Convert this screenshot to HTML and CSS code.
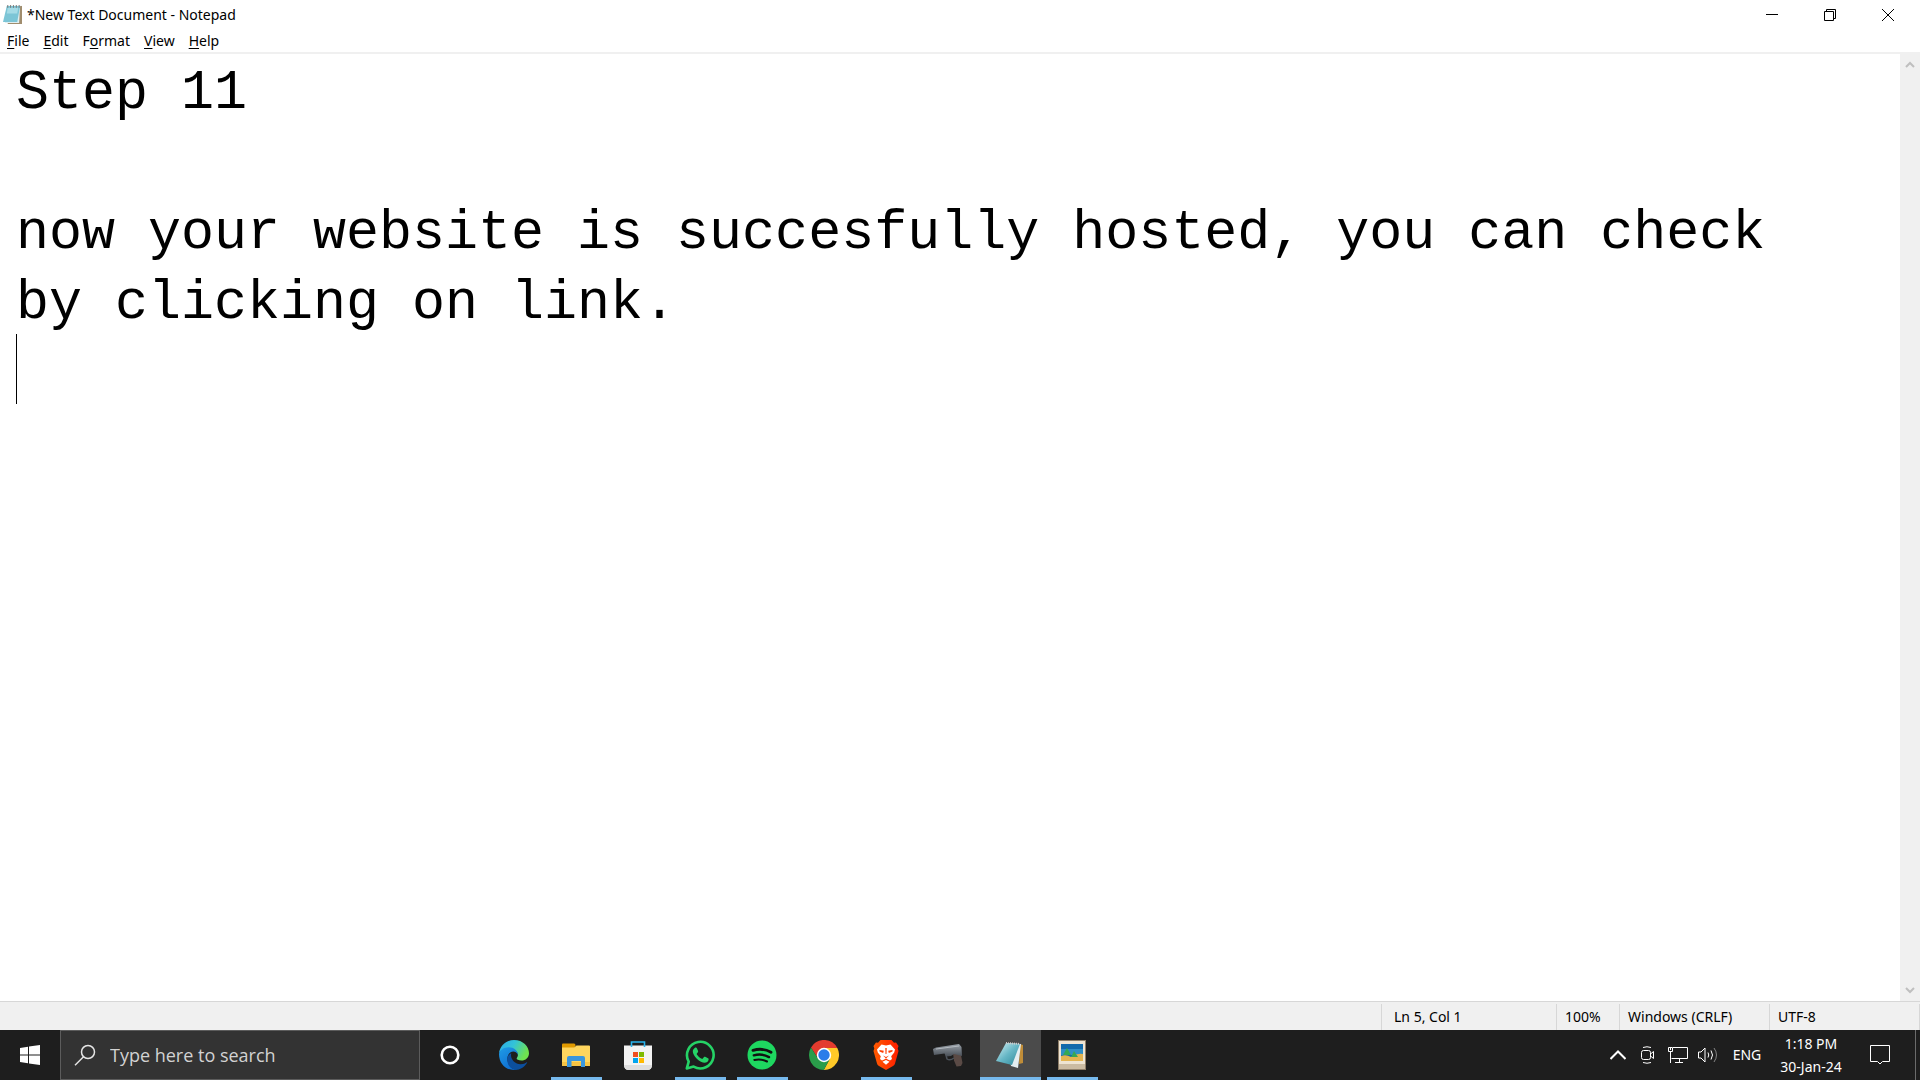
FILE: index.html
```html
<!DOCTYPE html>
<html lang="en">
<head>
<meta charset="utf-8">
<title>*New Text Document - Notepad</title>
<link rel="stylesheet" href="styles.css">
</head>
<body>
<main class="window">
  <header class="titlebar">
    <svg class="title-icon" viewBox="0 0 20 22" aria-hidden="true">
      <path d="M5 2h15v19H5z" fill="#a08d6e"/>
      <path d="M4 2h14l-1 18H2z" fill="#dfeef1"/>
      <path d="M4 2h14l-3 17H0z" fill="#7cc5d6"/>
      <path d="M5 4h11l-1 6H4z" fill="#a5dbe6"/>
      <path d="M5 1v3M8 1v3M11 1v3M14 1v3M17 1v3" stroke="#777" stroke-width="1"/>
    </svg>
    <h1 class="title">*New Text Document - Notepad</h1>
    <div class="window-controls">
      <button class="control" aria-label="Minimize"><svg viewBox="0 0 12 12"><path d="M0 5.500h12"/></svg></button>
      <button class="control" aria-label="Restore"><svg viewBox="0 0 12 12"><path d="M.5 2.500h9v9h-9zM2.500 2.500v-2h9v9h-2"/></svg></button>
      <button class="control" aria-label="Close"><svg viewBox="0 0 12 12"><path d="M0 0l12 12M12 0L0 12"/></svg></button>
    </div>
  </header>
  <nav class="menubar">
    <button class="menu"><u>F</u>ile</button>
    <button class="menu"><u>E</u>dit</button>
    <button class="menu">F<u>o</u>rmat</button>
    <button class="menu"><u>V</u>iew</button>
    <button class="menu"><u>H</u>elp</button>
  </nav>
  <section class="editor">
    <textarea class="document" aria-label="Text editor" spellcheck="false">Step 11

now your website is succesfully hosted, you can check
by clicking on link.
</textarea>
    <span class="caret"></span>
    <div class="scrollbar">
      <button class="scroll-button" aria-label="Scroll up"><svg viewBox="0 0 10 8"><path d="M1 6l4-4 4 4"/></svg></button>
      <button class="scroll-button" aria-label="Scroll down"><svg viewBox="0 0 10 8"><path d="M1 2l4 4 4-4"/></svg></button>
    </div>
  </section>
  <footer class="statusbar">
    <span class="status position">Ln 5, Col 1</span>
    <span class="status zoom">100%</span>
    <span class="status ending">Windows (CRLF)</span>
    <span class="status encoding">UTF-8</span>
  </footer>
</main>
<footer class="taskbar">
  <button class="start" aria-label="Start">
    <svg width="20" height="20" viewBox="0 0 20 20"><path fill="#fff" d="M0 3l8-1.200V9.500H0zM9 1.600L20 0v9.500H9zM0 10.500h8v7.800L0 17zM9 10.500h11V20L9 18.400z"/></svg>
  </button>
  <label class="search">
    <svg width="22" height="22" viewBox="0 0 22 22" fill="none" stroke="#e6e6e6" stroke-width="1.500"><circle cx="14" cy="8" r="6.500"/><path d="M9.500 12.800L1 21.200"/></svg>
    <input class="search-input" type="text" placeholder="Type here to search" aria-label="Search">
  </label>
  <button class="cortana" aria-label="Cortana"><svg width="20" height="20" viewBox="0 0 20 20"><circle cx="10" cy="10" r="8.300" fill="none" stroke="#fff" stroke-width="2.600"/></svg></button>
  <div class="apps">
    <button class="app" aria-label="Edge">
      <svg width="30" height="30" viewBox="0 0 30 30">
        <defs>
          <linearGradient id="edge-top" x1="0" y1="0" x2="1" y2=".4"><stop offset="0" stop-color="#2aa7e8"/><stop offset=".5" stop-color="#33c3d8"/><stop offset="1" stop-color="#6fe34f"/></linearGradient>
          <linearGradient id="edge-left" x1="0" y1="0" x2=".6" y2="1"><stop offset="0" stop-color="#1f9ce6"/><stop offset="1" stop-color="#0f6dd0"/></linearGradient>
        </defs>
        <path fill="url(#edge-top)" d="M0 13C1 5.500 7.500 0 15 0c9 0 15 6.500 15 13.200 0 4.500-3.500 7.300-7.500 7.300-3.500 0-5.300-1.200-4.800-2.300.8-1.200 1.200-2 1.200-3.400C18.800 11 14.500 8.500 10 8.500 5.500 8.500 2 10.500 0 13z"/>
        <path fill="url(#edge-left)" d="M0 14c.5-4 5-6.800 9.500-6.800 5.500 0 9.400 3.600 9.400 7.600-1-2.500-3-3.300-4.500-3.300-3 0-6 3-6 7C8.400 25 13 29.500 18 29.700 8 31.500 0 24.500 0 14z"/>
        <path fill="#0c4f9e" d="M12.300 13.200c-1.500 5.500 3 11 9.500 11 2.500 0 4.500-1 6-2 .3 0 .5.200.3.600C25.500 27 21 30 16.500 30 11 29 8 24 8.300 19c.1-2.700 1.700-5 4-5.800z"/>
      </svg>
    </button>
    <button class="app running" aria-label="File Explorer">
      <svg width="30" height="26" viewBox="0 0 30 26">
        <path fill="#e19a00" d="M1 2.500q0-1 1-1h11q1.500 0 1.500 2l-1.500 3H1z"/>
        <path fill="#ffd65e" d="M1 5.500h12l2.500-2H28q1 0 1 1V24H1z"/>
        <path fill="#f6c343" d="M1 20h28v4H1z"/>
        <path fill="#3a96dd" d="M8 14h14q2 0 2 2v9h-4v-6h-9.500v6H6v-9q0-2 2-2z"/>
      </svg>
    </button>
    <button class="app" aria-label="Microsoft Store">
      <svg width="30" height="30" viewBox="0 0 30 30">
        <path fill="#f3f3f3" d="M1 5.500h28V25q0 5-5 5H6q-5 0-5-5z"/>
        <path fill="#dedede" d="M1 25h28q0 5-5 5H6q-5 0-5-5z"/>
        <path fill="none" stroke="#28b4ee" stroke-width="1.600" d="M8.500 7V2h13v5"/>
        <path fill="#f25022" d="M10 12h5v5h-5z"/><path fill="#7fba00" d="M16 12h5v5h-5z"/><path fill="#00a4ef" d="M10 18h5v5h-5z"/><path fill="#ffb900" d="M16 18h5v5h-5z"/>
      </svg>
    </button>
    <button class="app running" aria-label="WhatsApp">
      <svg width="30" height="30" viewBox="0 0 30 30">
        <path fill="none" stroke="#25d366" stroke-width="2.600" stroke-linejoin="round" d="M1.800 28.400l1.900-6.800A13.300 13.300 0 1 1 8.600 26.600z"/>
        <path fill="#25d366" d="M9.700 8c.7-.7 1.900-.6 2.200.2l1.200 2.800c.2.600 0 1-.4 1.500l-.8 1c-.3.400-.3.600 0 1 1.200 2 2.700 3.300 4.900 4.300.4.200.7.100 1-.2l1.200-1.500c.4-.5.700-.5 1.200-.3l2.800 1.400c.6.300.7.600.6 1.200-.3 2.200-2 3.300-4 3.300-2 0-5.200-1.300-7.800-4-2.600-2.600-4-5.200-4-7.400 0-1.400.8-2.500 1.900-3.300z"/>
      </svg>
    </button>
    <button class="app running" aria-label="Spotify">
      <svg width="30" height="30" viewBox="0 0 30 30"><circle cx="15" cy="15" r="14.500" fill="#1ed760"/><path fill="none" stroke="#111" stroke-linecap="round" d="M6 10.300c6-1.600 12.500-1.200 18 1.900" stroke-width="2.900"/><path fill="none" stroke="#111" stroke-linecap="round" d="M6.800 15.300c5.500-1.400 10.500-.9 15.200 1.800" stroke-width="2.400"/><path fill="none" stroke="#111" stroke-linecap="round" d="M7.300 19.900c4.500-1 8.700-.6 12.700 1.600" stroke-width="2"/></svg>
    </button>
    <button class="app" aria-label="Chrome">
      <svg width="30" height="30" viewBox="0 0 30 30">
        <path fill="#ffc928" d="M15 8h13.300A15 15 0 0 1 14.800 30L21 18.500z"/>
        <path fill="#e33b2e" d="M2 7.500A15 15 0 0 1 28.300 8H15L9 18.500z"/>
        <path fill="#2a9d4a" d="M2 7.500L9 18.500l12 0L14.800 30A15 15 0 0 1 2 7.500z"/>
        <circle cx="15" cy="15" r="7.200" fill="#fff"/><circle cx="15" cy="15" r="5.700" fill="#2b7de9"/>
      </svg>
    </button>
    <button class="app running" aria-label="Brave">
      <svg width="26" height="30" viewBox="0 0 26 30">
        <defs><linearGradient id="brave-shield"><stop offset="0" stop-color="#ff5a00"/><stop offset="1" stop-color="#ff1f00"/></linearGradient></defs>
        <path fill="url(#brave-shield)" d="M7.500 0h11L21 2.700l2-.3L25.500 6l-.8 2.500.8 2.500-3.500 12.500c-.3 1.200-1 2-2 2.600L13 30l-7-3.900c-1-.6-1.700-1.400-2-2.600L.5 11l.8-2.500L.5 6 3 2.400l2 .3z"/>
        <path fill="#fff" d="M8.500 4.500L13 5.500l4.500-1L22 9.500l-.8 3-3 3.800.8 2.700-2 1.500-1.800-.8L13 18.500l-2.200 1.200-1.800.8L7 19l.8-2.700-3-3.800-.8-3z"/>
        <path fill="#ff3d00" d="M6.500 10l4.300.7-.6 2.300-3.700-1.500zM19.500 10l-4.300.7.600 2.300 3.700-1.500zM12.300 8h1.400l-.2 6h-1zM10 15.500l3 1.500 3-1.500-3 3z"/>
        <path fill="#fff" d="M9.500 21.800L13 20l3.500 1.800L13 24.800z"/>
      </svg>
    </button>
    <button class="app" aria-label="Game">
      <svg width="30" height="26" viewBox="0 0 30 26">
        <defs><linearGradient id="barrel" x2="0" y2="1"><stop offset="0" stop-color="#98a0a8"/><stop offset="1" stop-color="#484e56"/></linearGradient></defs>
        <path fill="#5a4a45" d="M20 11l8 2 1.500 8-1.500 3-4.500.5-2.500-6z"/>
        <path fill="none" stroke="#4c525a" stroke-width="1.500" d="M13 13l1 4q3 2 7-1"/>
        <path fill="url(#barrel)" d="M0 7l3-1.500L26 2l2.500 3L29 14l-8-2-3 2-5 .5-1.500-3L1 13z"/>
        <path stroke="#b4bac0" d="M3 7l23-3"/>
      </svg>
    </button>
    <button class="app running active" aria-label="Notepad">
      <svg width="30" height="28" viewBox="0 0 30 28">
        <defs><linearGradient id="pad" x2="1" y2="1"><stop offset="0" stop-color="#d8f2f5"/><stop offset=".5" stop-color="#67b7c6"/><stop offset="1" stop-color="#2d8798"/></linearGradient></defs>
        <path fill="#c08d38" d="M25 3l3 1v18l-4 1z"/>
        <path fill="#e4edf0" d="M11 2l15 1-3 24-7-2z"/>
        <path fill="url(#pad)" d="M11 2l14 1-8 21-16-4z"/>
        <path stroke="#ccc" stroke-dasharray="1 1" stroke-width="2" d="M11 2l14 1"/>
      </svg>
    </button>
    <button class="app running" aria-label="Photo Viewer">
      <svg width="28" height="30" viewBox="0 0 28 30">
        <path fill="#8f7f69" d="M0 0h28v30H0z"/><path fill="#eee4d2" d="M1 1h26v28H1z"/><path fill="#cbbba2" d="M1 24h26v5H1z"/>
        <path fill="#126aab" d="M3 4h22v17H3z"/><path fill="#2f8fc6" d="M3 9h22v6H3z"/>
        <path fill="#e3b450" d="M3 16q5-2 10 1 6-4 12-3v7H3z"/>
        <path fill="#35a853" d="M5 15l4-7 4 7zM13 17l3-6 4 6z"/>
      </svg>
    </button>
  </div>
  <div class="tray">
    <button class="tray-icon" aria-label="Show hidden icons"><svg class="chevron" width="16" height="10" viewBox="0 0 16 10"><path d="M.5 9L8 1.500 15.500 9"/></svg></button>
    <button class="tray-icon" aria-label="Meet Now"><svg width="16" height="18" viewBox="0 0 16 18"><rect x="1.500" y="4.500" width="9" height="9" rx="2"/><path d="M10.500 8l3-2.500v7l-3-2.500M3 1.500Q7 0 11 1.500M3 16.500Q7 18 11 16.500"/></svg></button>
    <button class="tray-icon" aria-label="Network"><svg width="20" height="18" viewBox="0 0 20 18"><path d="M5 1.500h14.500v11H3.500M.5 1.500h4v4h-4zM2.500 5.500V17M11.500 12.500V16M7 16.500h8M2.500 2v2"/></svg></button>
    <button class="tray-icon" aria-label="Volume"><svg width="20" height="18" viewBox="0 0 20 18"><path d="M.5 6v6H3l4 4V2L3 6zM10 6.500q1.500 2.500 0 5M13 4.500q3 4.500 0 9"/><path d="M16 2q5 7 0 14" opacity=".45"/></svg></button>
    <button class="language">ENG</button>
    <button class="clock"><time>1:18 PM</time><time>30-Jan-24</time></button>
    <button class="notifications" aria-label="Notifications"><svg width="20" height="20" viewBox="0 0 20 20"><path d="M.5.5h19v16h-7L10 19l-2.500-2.500h-7z"/></svg></button>
    <button class="show-desktop" aria-label="Show desktop"></button>
  </div>
</footer>
</body>
</html>
```
FILE: styles.css
```css
* { box-sizing: border-box; }

body {
  margin: 0;
  height: 100vh;
  display: flex;
  flex-direction: column;
  background: #fff;
  color: #000;
  font: 14px/20px "Noto Sans", "Open Sans", sans-serif;
}

button {
  margin: 0;
  padding: 0;
  border: 0;
  background: none;
  color: inherit;
  font: inherit;
}

svg { display: block; }

.window {
  flex: 1;
  min-height: 0;
  display: flex;
  flex-direction: column;
}

.titlebar {
  height: 29px;
  display: flex;
  align-items: center;
  padding: 0 3px;
}
.title-icon { width: 19px; height: 21px; }
.title { flex: 1; margin: 0 0 0 5px; font-size: 14px; font-weight: 400; }
.window-controls { display: flex; height: 100%; }
.control { width: 58px; display: grid; place-items: center; }
.control svg { width: 12px; height: 12px; fill: none; stroke: #000; }

.menubar {
  height: 25px;
  display: flex;
  align-items: center;
  border-bottom: 2px solid #f0f0f0;
}
.menu { padding: 0 7px; }
.menu u { text-underline-offset: 2px; }

.editor { position: relative; flex: 1; min-height: 0; display: flex; }
.document {
  flex: 1;
  margin: 0;
  padding: 5px 0 0 16px;
  border: 0;
  outline: 0;
  resize: none;
  overflow: hidden;
  background: #fff;
  color: #000;
  font: 55px/70px "Liberation Mono", monospace;
}
.caret {
  position: absolute;
  left: 16px;
  top: 280px;
  width: 1px;
  height: 70px;
  background: #000;
}
.scrollbar {
  width: 20px;
  display: flex;
  flex-direction: column;
  justify-content: space-between;
  background: #f0f0f0;
}
.scroll-button { height: 22px; display: grid; place-items: center; }
.scroll-button svg { width: 10px; height: 8px; fill: none; stroke: #bfbfbf; stroke-width: 2; }

.statusbar {
  height: 29px;
  display: flex;
  justify-content: flex-end;
  padding-top: 2px;
  border-top: 1px solid #d7d7d7;
  background: #f0f0f0;
}
.status { padding: 3px 0 0 8px; border-left: 1px solid #d7d7d7; }
.position { width: 175px; padding-left: 12px; }
.zoom { width: 63px; }
.ending { width: 150px; }
.encoding { width: 151px; border-right: 1px solid #d7d7d7; }

.taskbar {
  height: 50px;
  display: flex;
  background: #1e1e1e;
  color: #fff;
}
.start, .cortana { width: 60px; display: grid; place-items: center; }
.search {
  width: 360px;
  display: flex;
  align-items: center;
  gap: 14px;
  padding-left: 13px;
  border: 1px solid #5c5c5c;
  background: #333;
}
.search-input {
  flex: 1;
  min-width: 0;
  padding: 0;
  border: 0;
  outline: 0;
  background: none;
  color: #fff;
  font: 18px/24px "Open Sans", "Noto Sans", sans-serif;
}
.search-input::placeholder { color: #d2d2d2; opacity: 1; }

.apps { display: flex; gap: 1px; margin-left: 4px; }
.app {
  width: 61px;
  display: grid;
  place-items: center;
  padding-right: 2px;
  background: linear-gradient(#76b9ed, #76b9ed) bottom / 0 3px no-repeat;
}
.running { background-size: 51px 3px; }
.active { background-color: #4b4b4b; background-size: 100% 3px; }

.tray { margin-left: auto; display: flex; align-items: center; }
.tray svg { fill: none; stroke: #fff; stroke-width: 1; }
.tray .chevron { stroke-width: 2; }
.tray-icon { width: 30px; display: grid; place-items: center; }
.language { width: 54px; padding-right: 6px; }
.clock { width: 68px; display: grid; line-height: 23px; white-space: nowrap; }
.notifications { width: 70px; display: grid; place-items: center; }
.show-desktop { width: 5px; height: 100%; border-left: 1px solid #6b6b6b; }
```
